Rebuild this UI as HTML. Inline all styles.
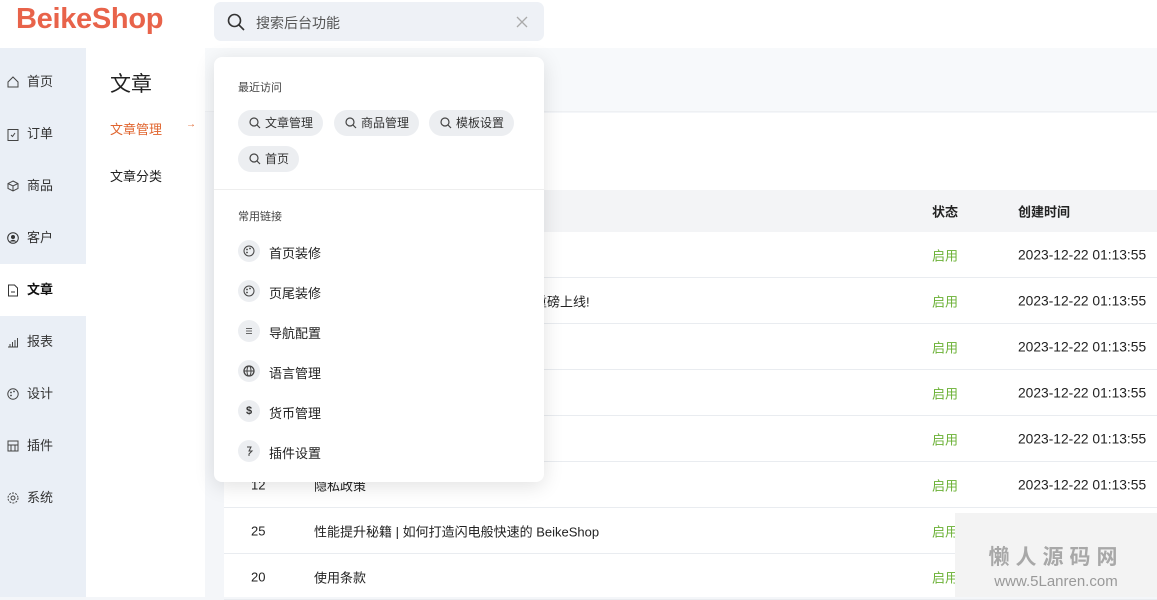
<!DOCTYPE html>
<html><head><meta charset="utf-8"><style>
*{box-sizing:border-box;margin:0;padding:0}
body{width:1157px;height:597px;overflow:hidden;background:#f4f6f9;font-family:"Liberation Sans","Noto Sans CJK SC",sans-serif;font-size:13px;color:#222;position:relative}
.hdr{position:absolute;left:0;top:0;width:1157px;height:48px;background:#fff;box-shadow:0 2px 6px rgba(0,0,0,.04)}
.logo{position:absolute;left:16px;top:3px;font-size:29px;font-weight:bold;color:#e8634a;letter-spacing:-.3px}
.search{position:absolute;left:214px;top:2px;width:330px;height:39px;background:#eef1f6;border-radius:7px}
.search span{position:absolute;left:42px;top:11px;font-size:14px;color:#555}
.side{position:absolute;left:0;top:48px;width:86px;height:549px;background:#eaeff6}
.side div{position:absolute;left:0;width:86px;height:52px;padding-left:27px;line-height:52px;font-size:13px;color:#333}
.side .act{background:#fff;font-weight:bold;color:#111}
.side svg{position:absolute;left:7px;top:20px}
.sub{position:absolute;left:86px;top:48px;width:119px;height:549px;background:#fff}
.sub h2{position:absolute;left:24px;top:20px;font-size:21px;font-weight:normal;color:#222}
.sub p{position:absolute;left:24px;font-size:13px}
.ph{position:absolute;left:205px;top:48px;width:952px;height:64px;background:#f7f9fb;border-bottom:1px solid #eef0f3}
.card{position:absolute;left:224px;top:113px;width:933px;height:484px;background:#fff}
.th{position:absolute;left:224px;top:190px;width:933px;height:42px;background:#f3f4f6;font-weight:bold}
.row{position:absolute;left:224px;width:933px;height:46px;border-bottom:1px solid #e9ecf0}
.row span,.th span{position:absolute;top:50%;transform:translateY(-50%);white-space:nowrap}
.d{font-size:13.8px}
.g{color:#6ab034}
.dd{position:absolute;left:214px;top:57px;width:330px;height:425px;background:#fff;border-radius:8px;box-shadow:0 4px 20px rgba(0,0,0,.12)}
.lbl{position:absolute;left:24px;font-size:11px;color:#444}
.chip{position:absolute;height:26px;line-height:26px;background:#eceef1;border-radius:13px;padding:0 10px 0 27px;font-size:12px;color:#333}
.chip svg{position:absolute;left:11px;top:7px}
.lk{position:absolute;left:24px;height:22px;font-size:13px;color:#222}
.lk b{position:absolute;left:0;top:0;width:22px;height:22px;border-radius:50%;background:#eceef1;font-size:11px;text-align:center;line-height:22px;color:#555;font-weight:normal}
.lk b svg{position:absolute;left:5px;top:5px}
.lk span{position:absolute;left:31px;top:3px;white-space:nowrap}
.wm{position:absolute;left:955px;top:513px;width:202px;height:84px;background:#f3f3f3;text-align:center;color:#999}
</style></head><body>
<div class="hdr"><div class="logo">BeikeShop</div>
<div class="search"><svg style="position:absolute;left:13px;top:11px" width="18" height="18" viewBox="0 0 18 18"><circle cx="7.5" cy="7.5" r="6" fill="none" stroke="#333" stroke-width="1.6"/><path d="M12 12l5 5" stroke="#333" stroke-width="1.6"/></svg><span>搜索后台功能</span><svg style="position:absolute;left:302px;top:14px" width="12" height="12"><path d="M1 1l10 10M11 1L1 11" stroke="#aaa" stroke-width="1.3"/></svg></div></div>
<div class="side">
<div style="top:8px"><svg width="12" height="12"><path d="M1 6L6 1l5 5v5H1z" fill="none" stroke="#444"/></svg>首页</div>
<div style="top:60px"><svg width="12" height="13"><rect x="1" y="1.5" width="10" height="11" fill="none" stroke="#444"/><path d="M4 7l1.5 1.5L8 5" fill="none" stroke="#444"/></svg>订单</div>
<div style="top:112px"><svg width="12" height="12"><path d="M6 1l5 2.5v5L6 11 1 8.5v-5zM1 3.5L6 6l5-2.5M6 6v5" fill="none" stroke="#444"/></svg>商品</div>
<div style="top:164px"><svg width="12" height="12"><circle cx="6" cy="6" r="5.3" fill="none" stroke="#333"/><circle cx="6" cy="5" r="2" fill="#333"/><path d="M2.5 9.5Q6 6 9.5 9.5" fill="#333"/></svg>客户</div>
<div class="act" style="top:216px"><svg width="12" height="13"><path d="M1.5 1h6l3 3v8h-9z" fill="none" stroke="#333"/><path d="M4 8h4" stroke="#333"/></svg>文章</div>
<div style="top:268px"><svg width="12" height="12"><path d="M1 11h10M3 11V8M5.5 11V6M8 11V4M10.5 11V2" stroke="#444"/></svg>报表</div>
<div style="top:320px"><svg width="12" height="12"><circle cx="6" cy="6" r="5.2" fill="none" stroke="#444"/><circle cx="4" cy="4.5" r=".9" fill="#444"/><circle cx="7" cy="3.5" r=".9" fill="#444"/><circle cx="4" cy="7.5" r=".9" fill="#444"/></svg>设计</div>
<div style="top:372px"><svg width="12" height="12"><rect x="1" y="1" width="10" height="10" fill="none" stroke="#444"/><path d="M1 5h10M4 5v6M8 5v6" stroke="#444"/></svg>插件</div>
<div style="top:424px"><svg width="12" height="12"><circle cx="6" cy="6" r="5" fill="none" stroke="#444" stroke-dasharray="2 1.2"/><circle cx="6" cy="6" r="2" fill="none" stroke="#444"/></svg>系统</div>
</div>
<div class="sub"><h2>文章</h2><p style="top:71px;color:#e0652f">文章管理<span style="position:absolute;left:76px;font-size:10px">→</span></p><p style="top:118px">文章分类</p></div>
<div class="ph"></div>
<div class="card"></div>
<div class="th"><span style="left:708px">状态</span><span style="left:794px">创建时间</span></div>
<div class="row" style="top:232px"><span class="g" style="left:708px">启用</span><span class="d" style="left:794px">2023-12-22 01:13:55</span></div>
<div class="row" style="top:278px"><span style="left:310px">重磅上线!</span><span class="g" style="left:708px">启用</span><span class="d" style="left:794px">2023-12-22 01:13:55</span></div>
<div class="row" style="top:324px"><span class="g" style="left:708px">启用</span><span class="d" style="left:794px">2023-12-22 01:13:55</span></div>
<div class="row" style="top:370px"><span class="g" style="left:708px">启用</span><span class="d" style="left:794px">2023-12-22 01:13:55</span></div>
<div class="row" style="top:416px"><span class="g" style="left:708px">启用</span><span class="d" style="left:794px">2023-12-22 01:13:55</span></div>
<div class="row" style="top:462px"><span style="left:27px">12</span><span style="left:90px">隐私政策</span><span class="g" style="left:708px">启用</span><span class="d" style="left:794px">2023-12-22 01:13:55</span></div>
<div class="row" style="top:508px"><span style="left:27px">25</span><span style="left:90px">性能提升秘籍 | 如何打造闪电般快速的 BeikeShop</span><span class="g" style="left:708px">启用</span></div>
<div class="row" style="top:554px"><span style="left:27px">20</span><span style="left:90px">使用条款</span><span class="g" style="left:708px">启用</span></div>
<div class="wm"><div style="font-size:21px;font-weight:bold;letter-spacing:6px;margin-top:28px;color:#a8a8a8">懒人源码网</div><div style="font-size:15px;margin-top:2px">www.5Lanren.com</div></div>
<div class="dd">
<div class="lbl" style="top:22px">最近访问</div>
<div class="chip" style="left:24px;top:53px"><svg width="12" height="12"><circle cx="5" cy="5" r="4" fill="none" stroke="#444" stroke-width="1.2"/><path d="M8 8l3 3" stroke="#444" stroke-width="1.2"/></svg>文章管理</div>
<div class="chip" style="left:120px;top:53px"><svg width="12" height="12"><circle cx="5" cy="5" r="4" fill="none" stroke="#444" stroke-width="1.2"/><path d="M8 8l3 3" stroke="#444" stroke-width="1.2"/></svg>商品管理</div>
<div class="chip" style="left:215px;top:53px"><svg width="12" height="12"><circle cx="5" cy="5" r="4" fill="none" stroke="#444" stroke-width="1.2"/><path d="M8 8l3 3" stroke="#444" stroke-width="1.2"/></svg>模板设置</div>
<div class="chip" style="left:24px;top:89px"><svg width="12" height="12"><circle cx="5" cy="5" r="4" fill="none" stroke="#444" stroke-width="1.2"/><path d="M8 8l3 3" stroke="#444" stroke-width="1.2"/></svg>首页</div>
<div style="position:absolute;left:0;top:132px;width:330px;height:1px;background:#eee"></div>
<div class="lbl" style="top:151px">常用链接</div>
<div class="lk" style="top:183px"><b><svg width="12" height="12"><circle cx="6" cy="6" r="5" fill="none" stroke="#444"/><circle cx="4" cy="4.5" r=".9" fill="#444"/><circle cx="7" cy="3.5" r=".9" fill="#444"/><circle cx="4" cy="7.5" r=".9" fill="#444"/></svg></b><span>首页装修</span></div>
<div class="lk" style="top:223px"><b><svg width="12" height="12"><circle cx="6" cy="6" r="5" fill="none" stroke="#444"/><circle cx="4" cy="4.5" r=".9" fill="#444"/><circle cx="7" cy="3.5" r=".9" fill="#444"/><circle cx="4" cy="7.5" r=".9" fill="#444"/></svg></b><span>页尾装修</span></div>
<div class="lk" style="top:263px"><b><svg width="12" height="12"><path d="M3 3.5h6M3 6h6M3 8.5h6" stroke="#666"/></svg></b><span>导航配置</span></div>
<div class="lk" style="top:303px"><b><svg width="12" height="12"><circle cx="6" cy="6" r="5" fill="none" stroke="#444" stroke-width="1.3"/><ellipse cx="6" cy="6" rx="2" ry="5" fill="none" stroke="#444"/><path d="M1 6h10" stroke="#444"/></svg></b><span>语言管理</span></div>
<div class="lk" style="top:343px"><b style="font-weight:bold;color:#333">$</b><span>货币管理</span></div>
<div class="lk" style="top:383px"><b><svg width="12" height="12"><path d="M4 2h4l-2 4h3l-3 3v2" fill="none" stroke="#444"/></svg></b><span>插件设置</span></div>
</div>
</body></html>
